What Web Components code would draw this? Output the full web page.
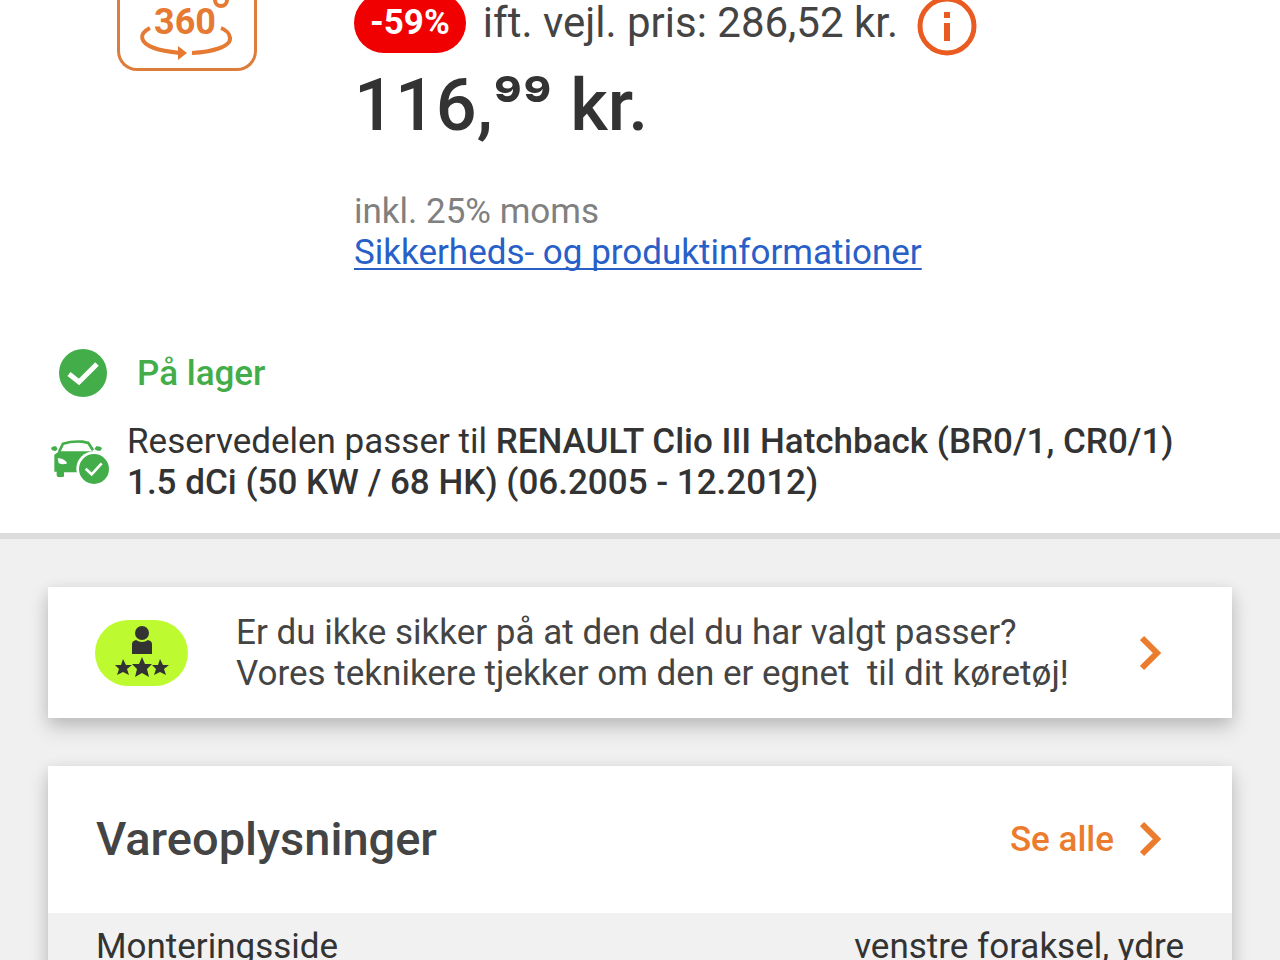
<!DOCTYPE html>
<html lang="da">
<head>
<meta charset="utf-8">
<meta name="viewport" content="width=device-width, initial-scale=1">
<title>Vareoplysninger</title>
<style>
  html, body {
    margin: 0;
    height: 100%;
    overflow: hidden;
  }

  body {
    background: #f0f0f0;
    color: #333;
    font-family: Roboto, "Liberation Sans", sans-serif;
    font-size: 35px;
    line-height: 41px;
  }
</style>
</head>
<body>
<product-page></product-page>

<script>
class ViewButton extends HTMLElement {
  constructor() {
    super();
    this.attachShadow({ mode: 'open' });
  }

  connectedCallback() {
    this.shadowRoot.innerHTML = `
      <style>
        :host {
          display: block;
          flex: none;
        }

        button {
          display: block;
          box-sizing: border-box;
          width: 140px;
          height: 78px;
          padding: 0;
          border: 3px solid #dd7d3c;
          border-top: 0;
          border-radius: 0 0 20px 20px;
          background: none;
          cursor: pointer;
        }

        svg {
          display: block;
        }

        text {
          font: bold 36px Roboto, "Liberation Sans", sans-serif;
        }
      </style>
      <button type="button" aria-label="360 grader">
        <svg width="134" height="75" viewBox="0 0 134 75" fill="none" stroke="#e67a32" stroke-width="4">
          <text x="65" y="41" text-anchor="middle" fill="#e67a32" stroke="none">360</text>
          <circle cx="101" cy="7" r="6"/>
          <path d="M30 35C18 41 20 50 34 55C42 58 51 59 60 60"/>
          <path d="M58 53L67 60L58 67Z" fill="#e67a32" stroke="none"/>
          <path d="M72 60C91 59 111 54 110 45C110 41 106 37 101 35"/>
        </svg>
      </button>
    `;
  }
}

class DiscountBadge extends HTMLElement {
  constructor() {
    super();
    this.attachShadow({ mode: 'open' });
  }

  connectedCallback() {
    this.shadowRoot.innerHTML = `
      <style>
        :host {
          display: block;
          padding: 0 16px;
          border-radius: 30px;
          background: #f00000;
          color: #fff;
          font-size: 35px;
          font-weight: 700;
          line-height: 60px;
        }
      </style>
      <slot></slot>
    `;
  }
}

class PriceBlock extends HTMLElement {
  constructor() {
    super();
    this.attachShadow({ mode: 'open' });
  }

  connectedCallback() {
    this.shadowRoot.innerHTML = `
      <style>
        :host {
          display: block;
        }

        .discount {
          display: flex;
          align-items: flex-start;
          gap: 17px;
          height: 64px;
          color: #444;
          font-size: 42px;
          line-height: 60px;
          white-space: nowrap;
        }

        button {
          padding: 0;
          border: 0;
          background: none;
          cursor: pointer;
        }

        svg {
          display: block;
        }

        .price {
          margin: 7px 0 43px;
          font-size: 72px;
          font-weight: 500;
          line-height: 84px;
        }

        .cents {
          font-family: Inter, Roboto, sans-serif;
          font-size: 64px;
          font-weight: 600;
          line-height: 1;
        }

        .vat {
          color: #808080;
        }

        a {
          color: #2860c8;
          text-decoration-thickness: 2px;
          text-underline-offset: 4px;
          text-decoration-skip-ink: none;
        }
      </style>
      <div class="discount">
        <discount-badge>-59%</discount-badge>
        <span>ift. vejl. pris: 286,52 kr.</span>
        <button type="button" aria-label="Information">
          <svg width="64" height="64" viewBox="0 0 64 64">
            <circle cx="32" cy="33" r="27" fill="none" stroke="#ea5b21" stroke-width="5"/>
            <path d="M29 19h6v6h-6zM29 30h6v18h-6z" fill="#ea5b21"/>
          </svg>
        </button>
      </div>
      <div class="price">116,<span class="cents">⁹⁹</span> kr.</div>
      <div class="vat">inkl. 25% moms</div>
      <a href="#produktinformation">Sikkerheds- og produktinformationer</a>
    `;
  }
}

class StockStatus extends HTMLElement {
  constructor() {
    super();
    this.attachShadow({ mode: 'open' });
  }

  connectedCallback() {
    this.shadowRoot.innerHTML = `
      <style>
        :host {
          display: flex;
          align-items: center;
          gap: 30px;
          padding-left: 59px;
          color: #43ad49;
          font-weight: 500;
        }
      </style>
      <svg width="48" height="48" viewBox="0 0 48 48">
        <circle cx="24" cy="24" r="24" fill="#43ad49"/>
        <path d="M10 25L20 33L38 15" fill="none" stroke="#fff" stroke-width="5"/>
      </svg>
      <span><slot></slot></span>
    `;
  }
}

class CarFit extends HTMLElement {
  constructor() {
    super();
    this.attachShadow({ mode: 'open' });
  }

  connectedCallback() {
    this.shadowRoot.innerHTML = `
      <style>
        :host {
          display: flex;
          align-items: center;
          gap: 17px;
          padding: 0 68px 0 51px;
        }

        svg {
          flex: none;
        }

        ::slotted(b) {
          font-weight: 500;
        }
      </style>
      <svg width="59" height="44" viewBox="0 0 177 132">
        <path d="M24 36L36 11Q62 3 94 5L112 9L126 31" fill="none" stroke="#43ad49" stroke-width="8"/>
        <path d="M0 24Q5 17 15 19L20 27L14 33L3 31ZM153 24Q147 17 136 19L130 27L139 32H149Z" fill="#43ad49"/>
        <path d="M10 44L25 34H124L140 45V97H39V109Q39 111 34 111H22Q17 111 17 106V95H10Z" fill="#43ad49"/>
        <path d="M20 55Q38 54 49 70Q34 76 23 69Z" fill="#fff"/>
        <circle cx="128" cy="86" r="52" fill="#fff"/>
        <circle cx="129" cy="87" r="45" fill="#43ad49"/>
        <path d="M104 86L122 103L152 70" fill="none" stroke="#fff" stroke-width="8"/>
      </svg>
      <div><slot></slot></div>
    `;
  }
}

class ChevronIcon extends HTMLElement {
  constructor() {
    super();
    this.attachShadow({ mode: 'open' });
  }

  connectedCallback() {
    this.shadowRoot.innerHTML = `
      <style>
        :host {
          display: block;
          flex: none;
        }

        svg {
          display: block;
        }
      </style>
      <svg width="24" height="36" viewBox="0 0 24 36">
        <path d="M2 3L17 18L2 33" fill="none" stroke="#ec7c2d" stroke-width="6"/>
      </svg>
    `;
  }
}

class ExpertCard extends HTMLElement {
  constructor() {
    super();
    this.attachShadow({ mode: 'open' });
  }

  connectedCallback() {
    this.shadowRoot.innerHTML = `
      <style>
        :host {
          display: block;
          background: #fff;
          box-shadow: 0 10px 20px rgba(0, 0, 0, 0.16), 0 4px 14px rgba(0, 0, 0, 0.1);
        }

        a {
          display: flex;
          align-items: center;
          gap: 48px;
          padding: 25px 68px 24px 47px;
          color: #444;
          text-decoration: none;
        }

        .text {
          flex: 1;
          white-space: pre-wrap;
        }

        svg {
          flex: none;
        }
      </style>
      <a href="#ekspert">
        <svg width="93" height="66" viewBox="0 0 93 66">
          <rect width="93" height="66" rx="33" fill="#bdfb30"/>
          <g fill="#333">
            <circle cx="47" cy="13" r="7"/>
            <path d="M37 24Q37 21 41 20Q47 24 53 20Q57 21 57 24V34H37Z"/>
            <path d="M47 37L50 44L57 44L52 49L54 57L47 53L40 57L42 49L37 44L44 44Z"/>
            <path d="M28 39L31 45L37 45L32 49L34 55L28 52L22 55L24 49L20 45L26 45Z"/>
            <path d="M65 39L68 45L74 45L69 49L71 55L65 52L59 55L61 49L57 45L63 45Z"/>
          </g>
        </svg>
        <span class="text"><slot></slot></span>
        <chevron-icon></chevron-icon>
      </a>
    `;
  }
}

class ProductDetails extends HTMLElement {
  constructor() {
    super();
    this.attachShadow({ mode: 'open' });
  }

  connectedCallback() {
    this.shadowRoot.innerHTML = `
      <style>
        :host {
          display: block;
          background: #fff;
          box-shadow: 0 10px 20px rgba(0, 0, 0, 0.16), 0 4px 14px rgba(0, 0, 0, 0.1);
        }

        header {
          display: flex;
          align-items: center;
          justify-content: space-between;
          padding: 45px 68px 46px 48px;
        }

        h2 {
          margin: 0;
          color: #444;
          font-size: 47px;
          font-weight: 500;
          line-height: 56px;
        }

        a {
          display: flex;
          align-items: center;
          gap: 26px;
          color: #ec7c2d;
          font-weight: 500;
          text-decoration: none;
        }

        table {
          width: 100%;
          border-collapse: collapse;
          background: #f1f1f1;
        }

        th, td {
          padding: 13px 48px;
          font-weight: 400;
          text-align: left;
        }

        td {
          text-align: right;
        }
      </style>
      <header>
        <h2>Vareoplysninger</h2>
        <a href="#alle">Se alle <chevron-icon></chevron-icon></a>
      </header>
      <table>
        <tr>
          <th scope="row">Monteringsside</th>
          <td>venstre foraksel, ydre</td>
        </tr>
      </table>
    `;
  }
}

class ProductPage extends HTMLElement {
  constructor() {
    super();
    this.attachShadow({ mode: 'open' });
  }

  connectedCallback() {
    this.shadowRoot.innerHTML = `
      <style>
        :host {
          display: block;
          margin-top: -7px;
        }

        .product {
          padding-bottom: 30px;
          border-bottom: 6px solid #dcdcdc;
          background: #fff;
        }

        .top {
          display: flex;
          gap: 97px;
          padding-left: 117px;
          margin-bottom: 76px;
        }

        stock-status {
          margin-bottom: 24px;
        }

        .cards {
          display: flex;
          flex-direction: column;
          gap: 48px;
          padding: 48px;
        }
      </style>
      <main>
        <section class="product">
          <div class="top">
            <view-button></view-button>
            <price-block></price-block>
          </div>
          <stock-status>På lager</stock-status>
          <car-fit>Reservedelen passer til <b>RENAULT Clio III Hatchback (BR0/1, CR0/1) 1.5 dCi (50 KW / 68 HK) (06.2005 - 12.2012)</b></car-fit>
        </section>
        <div class="cards">
          <expert-card>Er du ikke sikker på at den del du har valgt passer?<br>Vores teknikere tjekker om den er egnet  til dit køretøj!</expert-card>
          <product-details></product-details>
        </div>
      </main>
    `;
  }
}

customElements.define('view-button', ViewButton);
customElements.define('discount-badge', DiscountBadge);
customElements.define('price-block', PriceBlock);
customElements.define('stock-status', StockStatus);
customElements.define('car-fit', CarFit);
customElements.define('chevron-icon', ChevronIcon);
customElements.define('expert-card', ExpertCard);
customElements.define('product-details', ProductDetails);
customElements.define('product-page', ProductPage);
</script>
</body>
</html>
